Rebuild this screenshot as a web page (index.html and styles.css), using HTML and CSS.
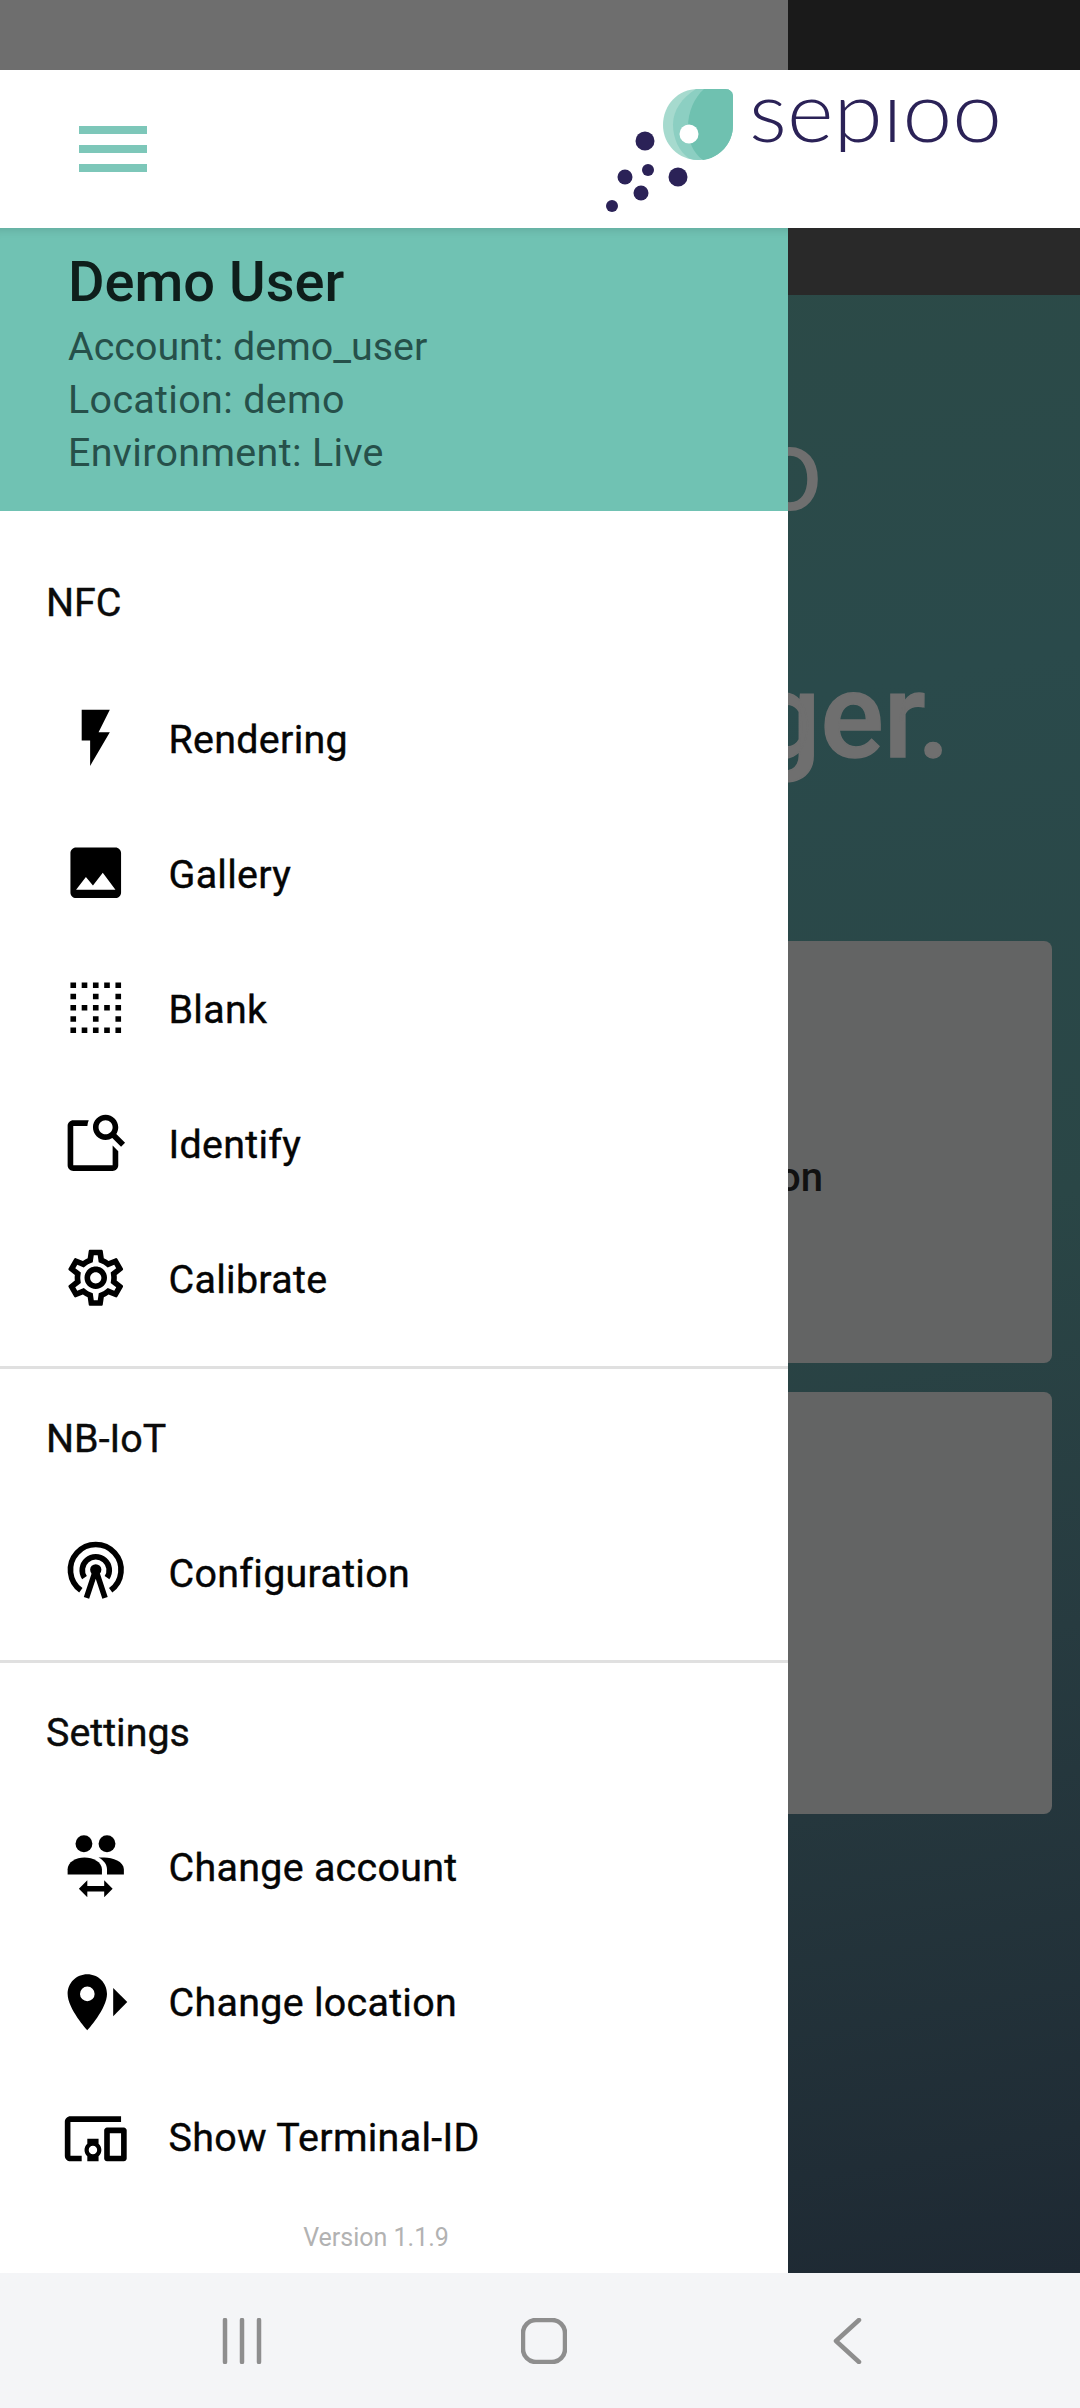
FILE: index.html
```html
<!DOCTYPE html>
<html lang="en">
<head>
    <meta charset="UTF-8">
    <meta name="viewport" content="width=device-width, initial-scale=1.0">
    <title>Sepioo</title>
    <link rel="stylesheet" href="styles.css">
</head>
<body>
    <div class="screen">
        <div class="status-bar">
            <div class="status-left"></div>
            <div class="status-right"></div>
        </div>

        <header class="top-bar">
            <div class="hamburger"><span></span><span></span><span></span></div>
            <svg class="logo" viewBox="0 0 420 130" width="420" height="130">
                <defs>
                    <clipPath id="wordClip">
                        <rect x="140" y="0" width="280" height="69"/>
                    </clipPath>
                </defs>
                <path d="M92 6h27c5 0 8 3 8 8v28c0 20-16 35-35 35s-35-15-35-35S72 6 92 6z" fill="#a6dace"/>
                <path d="M90 6h29c5 0 8 3 8 8v28c0 20-16 35-35 35-3 0-6-.5-9-1.500-10-7-16-20-16-34 0-14 9-27 23-35.500z" fill="#8ccfc2"/>
                <path d="M98 6h21c5 0 8 3 8 8v28c0 19-14 33-30 35-10-7-15-19-15-33 0-15 6-29 16-38z" fill="#6fc1b0"/>
                <circle cx="83" cy="51" r="9.500" fill="#fff"/>
                <g fill="#2b2257">
                    <circle cx="39" cy="58" r="9.500"/>
                    <circle cx="19" cy="94" r="7.500"/>
                    <circle cx="42" cy="87" r="6"/>
                    <circle cx="72" cy="94" r="9.500"/>
                    <circle cx="35" cy="110" r="7.500"/>
                    <circle cx="6" cy="123" r="6"/>
                </g>
                <text class="logo-word" x="143" y="59" textLength="253" lengthAdjust="spacingAndGlyphs" clip-path="url(#wordClip)">sepıoo</text>
            </svg>
        </header>

        <div class="stage">
            <div class="sub-bar"></div>
            <main class="backdrop">
                <div class="hero-one">o</div>
                <div class="hero-two">ger.</div>
                <div class="card card-first"><span>on</span></div>
                <div class="card"></div>
            </main>

            <nav class="drawer">
                <div class="drawer-head">
                    <div class="user-name">Demo User</div>
                    <div class="user-line account">Account: demo_user</div>
                    <div class="user-line">Location: demo</div>
                    <div class="user-line">Environment: Live</div>
                </div>

                <section class="menu-section first">
                    <div class="menu-label">NFC</div>
                    <a class="menu-item">
                        <svg class="icon" viewBox="0 0 24 24"><path d="M7 2v11h3v9l7-12h-4l4-8z"/></svg>
                        <span class="menu-text">Rendering</span>
                    </a>
                    <a class="menu-item">
                        <svg class="icon" viewBox="0 0 24 24"><path d="M21 19V5c0-1.1-.9-2-2-2H5c-1.1 0-2 .9-2 2v14c0 1.1.9 2 2 2h14c1.1 0 2-.9 2-2zM8.5 13.5l2.5 3.01L14.5 12l4.5 6H5l3.5-4.5z"/></svg>
                        <span class="menu-text">Gallery</span>
                    </a>
                    <a class="menu-item">
                        <svg class="icon" viewBox="0 0 24 24"><path d="M7 5h2V3H7v2zm0 8h2v-2H7v2zm0 8h2v-2H7v2zm4-4h2v-2h-2v2zm0 4h2v-2h-2v2zm-8 0h2v-2H3v2zm0-4h2v-2H3v2zm0-4h2v-2H3v2zm0-4h2V7H3v2zm0-4h2V3H3v2zm8 8h2v-2h-2v2zm8 4h2v-2h-2v2zm0-4h2v-2h-2v2zm0 8h2v-2h-2v2zm0-12h2V7h-2v2zm-8 0h2V7h-2v2zm8-6v2h2V3h-2zm-8 2h2V3h-2v2zm4 16h2v-2h-2v2zm0-8h2v-2h-2v2zm0-8h2V3h-2v2z"/></svg>
                        <span class="menu-text">Blank</span>
                    </a>
                    <a class="menu-item">
                        <svg class="icon" viewBox="0 0 24 24"><path d="M18 13v7H4V6h5.02c.05-.71.22-1.38.49-2H4c-1.1 0-2 .9-2 2v14c0 1.1.9 2 2 2h14c1.1 0 2-.9 2-2v-5l-2-2z"/><path d="M19.3 8.9c.44-.7.7-1.51.7-2.4C20 4.01 17.99 2 15.5 2S11 4.01 11 6.5 13.01 11 15.5 11c.88 0 1.7-.26 2.39-.7L21 13.42 22.42 12 19.3 8.9zM15.5 9C14.12 9 13 7.88 13 6.5S14.12 4 15.5 4 18 5.12 18 6.5 16.88 9 15.5 9z"/></svg>
                        <span class="menu-text">Identify</span>
                    </a>
                    <a class="menu-item">
                        <svg class="icon" viewBox="0 0 24 24"><path d="M19.43 12.98c.04-.32.07-.64.07-.98 0-.34-.03-.66-.07-.98l2.11-1.65c.19-.15.24-.42.12-.64l-2-3.46c-.09-.16-.26-.25-.44-.25-.06 0-.12.01-.17.03l-2.49 1c-.52-.4-1.08-.73-1.69-.98l-.38-2.65C14.46 2.18 14.25 2 14 2h-4c-.25 0-.46.18-.49.42l-.38 2.65c-.61.25-1.17.59-1.69.98l-2.49-1c-.06-.02-.12-.03-.18-.03-.17 0-.34.09-.43.25l-2 3.46c-.13.22-.07.49.12.64l2.11 1.65c-.04.32-.07.65-.07.98 0 .33.03.66.07.98l-2.11 1.65c-.19.15-.24.42-.12.64l2 3.46c.09.16.26.25.44.25.06 0 .12-.01.17-.03l2.49-1c.52.4 1.08.73 1.69.98l.38 2.65c.03.24.24.42.49.42h4c.25 0 .46-.18.49-.42l.38-2.65c.61-.25 1.17-.59 1.69-.98l2.49 1c.06.02.12.03.18.03.17 0 .34-.09.43-.25l2-3.46c.12-.22.07-.49-.12-.64l-2.11-1.65zm-1.98-1.71c.04.31.05.52.05.73 0 .21-.02.43-.05.73l-.14 1.13.89.7 1.08.84-.7 1.21-1.27-.51-1.04-.42-.9.68c-.43.32-.84.56-1.25.73l-1.06.43-.16 1.13-.2 1.35h-1.4l-.19-1.35-.16-1.13-1.06-.43c-.43-.18-.83-.41-1.23-.71l-.91-.7-1.06.43-1.27.51-.7-1.21 1.08-.84.89-.7-.14-1.13c-.03-.31-.05-.54-.05-.74s.02-.43.05-.73l.14-1.13-.89-.7-1.08-.84.7-1.21 1.27.51 1.04.42.9-.68c.43-.32.84-.56 1.25-.73l1.06-.43.16-1.13.2-1.35h1.39l.19 1.35.16 1.13 1.06.43c.43.18.83.41 1.23.71l.91.7 1.06-.43 1.27-.51.7 1.21-1.07.85-.89.7.14 1.13zM12 8c-2.21 0-4 1.79-4 4s1.79 4 4 4 4-1.79 4-4-1.79-4-4-4zm0 6c-1.1 0-2-.9-2-2s.9-2 2-2 2 .9 2 2-.9 2-2 2z"/></svg>
                        <span class="menu-text">Calibrate</span>
                    </a>
                </section>

                <section class="menu-section">
                    <div class="menu-label">NB-IoT</div>
                    <a class="menu-item">
                        <svg class="icon" viewBox="0 0 24 24">
                            <path class="tower" d="M6.7 18.6a9 9 0 1 1 10.6 0"/>
                            <path class="tower" d="M8 14.1a4.8 4.8 0 1 1 8 0"/>
                            <path class="tower" d="M12 11.3l-3.3 10M12 11.3l3.3 10"/>
                            <circle cx="12" cy="11.3" r="2"/>
                        </svg>
                        <span class="menu-text">Configuration</span>
                    </a>
                </section>

                <section class="menu-section last">
                    <div class="menu-label">Settings</div>
                    <a class="menu-item">
                        <svg class="icon" viewBox="0 0 24 24">
                            <circle cx="7.8" cy="3.1" r="3"/>
                            <circle cx="16" cy="3.1" r="3"/>
                            <path d="M2 14v-1.8C2 9.6 5 8 8 8s6.2 1.6 6.2 4.2V14z"/>
                            <path d="M13 8h2c3 0 7 1.4 7 4.2V14h-6v-1.8c0-1.8-1.200-3.200-3-4.200z"/>
                            <path d="M6 19.1l3-3v2h6v-2l3 3-3 3v-2H9v2z"/>
                        </svg>
                        <span class="menu-text">Change account</span>
                    </a>
                    <a class="menu-item">
                        <svg class="icon" viewBox="0 0 24 24">
                            <path fill-rule="evenodd" d="M9 1.500C5.100 1.500 2 4.600 2 8.500c0 5.200 7 12.900 7 12.900s7-7.700 7-12.900c0-3.900-3.100-7-7-7zM9 5.900a2.600 2.600 0 1 1 0 5.200a2.600 2.600 0 1 1 0-5.200z"/>
                            <path d="M18.200 6.400l5 5-5 5z"/>
                        </svg>
                        <span class="menu-text">Change location</span>
                    </a>
                    <a class="menu-item">
                        <svg class="icon" viewBox="0 0 24 24"><path d="M3 6h18V4H3c-1.100 0-2 .9-2 2v12c0 1.100.9 2 2 2h4v-2H3V6zm10 6H9v1.780c-.61.55-1 1.330-1 2.220s.39 1.670 1 2.220V20h4v-1.780c.61-.55 1-1.340 1-2.220s-.39-1.670-1-2.220V12zm-2 5.500c-.83 0-1.500-.67-1.500-1.500s.67-1.500 1.500-1.500 1.500.67 1.500 1.500-.67 1.500-1.500 1.500zM22 8h-6c-.5 0-1 .5-1 1v10c0 .5.5 1 1 1h6c.5 0 1-.5 1-1V9c0-.5-.5-1-1-1zm-1 10h-4v-8h4v8z"/></svg>
                        <span class="menu-text">Show Terminal-ID</span>
                    </a>
                </section>

                <div class="version">Version 1.1.9</div>
            </nav>
        </div>

        <footer class="nav-bar">
            <svg class="nav-icon" viewBox="0 0 40 46" width="40" height="46">
                <path d="M3 2v42M20 2v42M37 2v42"/>
            </svg>
            <svg class="nav-icon" viewBox="0 0 46 46" width="46" height="46">
                <rect x="2" y="2" width="42" height="42" rx="13"/>
            </svg>
            <svg class="nav-icon" viewBox="0 0 36 46" width="36" height="46">
                <path d="M33 2L10 23l23 21"/>
            </svg>
        </footer>
    </div>
</body>
</html>
```

FILE: styles.css
```css
* {
    box-sizing: border-box;
}
body {
    margin: 0;
    font-family: Roboto, "Liberation Sans", sans-serif;
    background: #000;
}
.screen {
    width: 1080px;
    height: 2408px;
    display: flex;
    flex-direction: column;
    overflow: hidden;
}

/* Status bar */
.status-bar {
    height: 70px;
    display: flex;
}
.status-left {
    width: 788px;
    background-color: #6e6e6e;
}
.status-right {
    flex: 1;
    background-color: #1a1a1a;
}

/* Top bar */
.top-bar {
    height: 158px;
    background-color: #fff;
    display: flex;
    align-items: center;
    justify-content: space-between;
    padding-left: 79px;
    position: relative;
    z-index: 2;
}
.hamburger {
    display: flex;
    flex-direction: column;
    gap: 11px;
    width: 68px;
}
.hamburger span {
    height: 8px;
    background-color: #7dc7b9;
}
.logo {
    margin-right: 54px;
    margin-top: -3px;
    overflow: visible;
}
.logo-word {
    font-family: Lato, sans-serif;
    font-weight: 300;
    font-size: 84px;
    fill: #2b2257;
}

/* Screen behind the drawer */
.stage {
    flex: 1;
    position: relative;
    display: flex;
    flex-direction: column;
}
.sub-bar {
    height: 67px;
    background-color: #292929;
}
.backdrop {
    flex: 1;
    padding: 0 28px;
    background: linear-gradient(170deg, #2c4a46 0%, #2a4a4b 25%, #2a4646 50%, #273b40 70%, #1e2933 100%);
    color: #6f6f6f;
}
.hero-one {
    height: 235px;
    padding-top: 115px;
    padding-right: 229px;
    text-align: right;
    font-size: 116px;
    line-height: 120px;
    font-weight: 400;
}
.hero-two {
    height: 411px;
    padding-top: 122px;
    padding-right: 102px;
    text-align: right;
    font-size: 118px;
    line-height: 130px;
    font-weight: 500;
    -webkit-text-stroke: 1.5px #6f6f6f;
}
.card {
    height: 422px;
    margin-bottom: 29px;
    border-radius: 8px;
    background-color: #636464;
    display: flex;
    align-items: center;
    justify-content: flex-end;
    padding: 50px 229px 0 0;
    color: #111;
    font-size: 40px;
    font-weight: 500;
}

/* Drawer */
.drawer {
    position: absolute;
    top: 0;
    bottom: 0;
    left: 0;
    width: 788px;
    background-color: #fff;
    display: flex;
    flex-direction: column;
}
.drawer-head {
    height: 283px;
    padding: 21px 0 0 68px;
    background-color: #70c2b3;
    box-shadow: inset 0 10px 8px -8px rgba(0, 0, 0, 0.12);
}
.user-name {
    font-size: 56px;
    line-height: 66px;
    font-weight: 500;
    color: #0e1e1b;
    margin-bottom: 5px;
}
.user-line {
    font-size: 39.4px;
    line-height: 53px;
    letter-spacing: 0.35px;
    color: #26504a;
}
.user-line.account {
    letter-spacing: 0;
}
.menu-section {
    padding-bottom: 21px;
    border-bottom: 3px solid #e0e0e0;
}
.menu-section.first {
    padding-top: 24px;
}
.menu-section.last {
    padding: 3px 0 0;
    border-bottom: 0;
}
.menu-label {
    height: 135px;
    padding: 3px 0 0 46px;
    display: flex;
    align-items: center;
    font-size: 39.4px;
    -webkit-text-stroke: 0.4px #0b0b0b;
    color: #0b0b0b;
}
.first .menu-label {
    padding-top: 0;
}
.last .menu-label {
    padding: 0 0 3px 46px;
}
.menu-item {
    height: 135px;
    padding-left: 62px;
    display: flex;
    align-items: center;
    gap: 39px;
    font-size: 39.4px;
    letter-spacing: 0.3px;
    -webkit-text-stroke: 0.4px #050505;
    color: #050505;
}
.menu-text {
    padding-top: 3px;
}
.last .menu-text {
    padding: 0 0 3px;
}
.icon {
    width: 67.5px;
    height: 67.5px;
    flex-shrink: 0;
    fill: #000;
}
.tower {
    fill: none;
    stroke: #000;
    stroke-width: 2;
}
.version {
    padding: 14px 36px 0 0;
    text-align: center;
    font-size: 25px;
    line-height: 36px;
    color: #b2b2b2;
}

/* Android navigation bar */
.nav-bar {
    height: 135px;
    background-color: #f4f5f7;
    display: flex;
    align-items: center;
    justify-content: space-between;
    padding: 0 218px 0 222px;
}
.nav-icon {
    fill: none;
    stroke: #8e8e8e;
    stroke-width: 4.5;
    stroke-linecap: round;
    stroke-linejoin: round;
}
```
